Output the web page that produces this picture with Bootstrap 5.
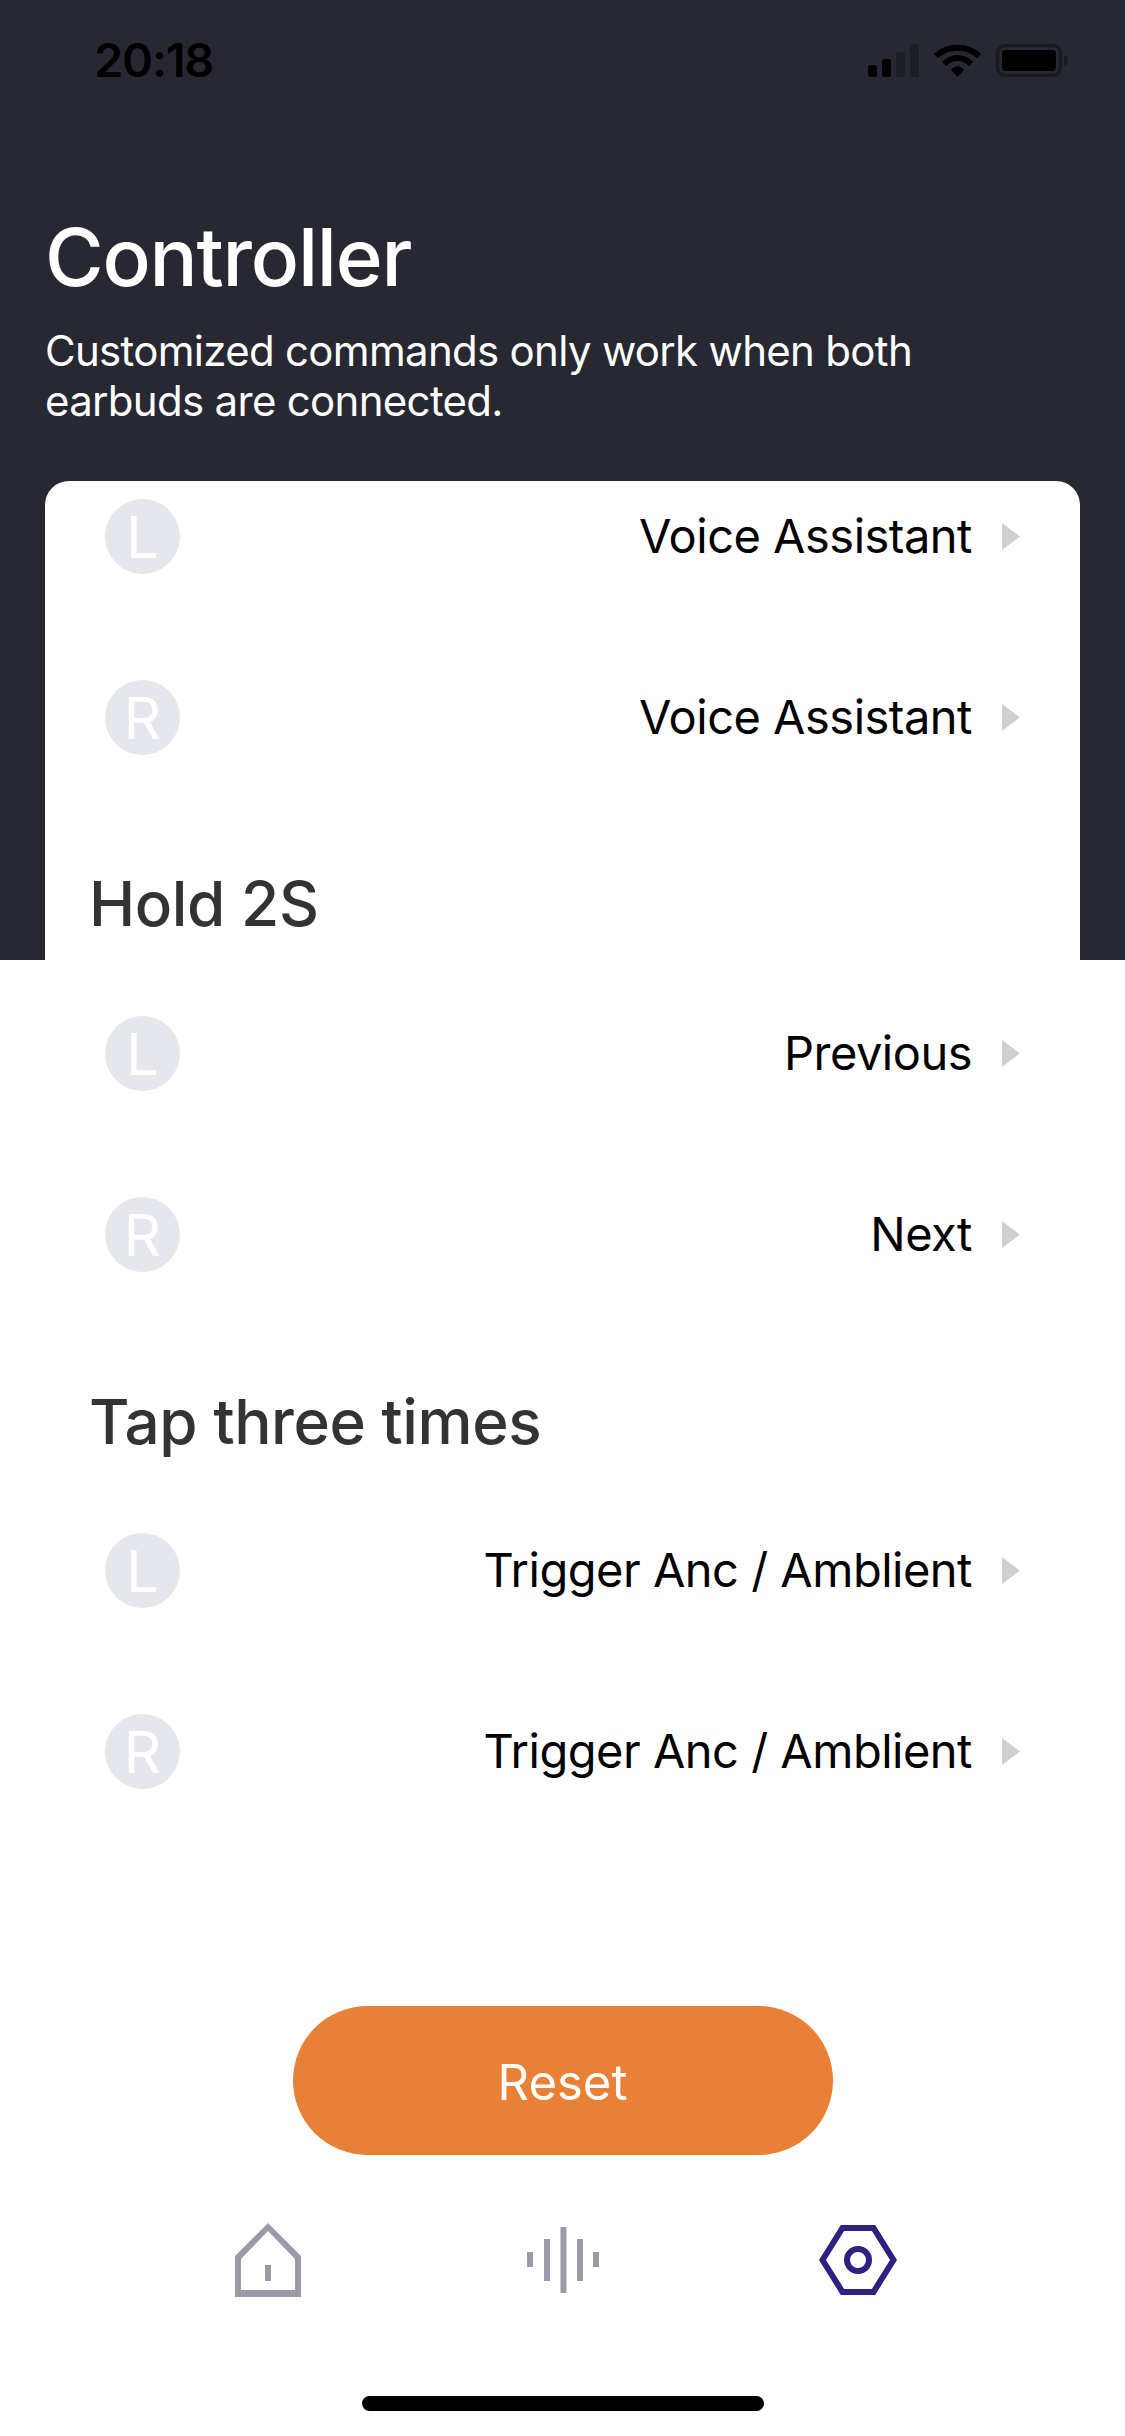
<!DOCTYPE html>
<html lang="en">
<head>
    <meta charset="UTF-8">
    <meta name="viewport" content="width=device-width, initial-scale=1.0">
    <title>Controller</title>
    <link href="https://cdn.jsdelivr.net/npm/bootstrap@5.3.0/dist/css/bootstrap.min.css" rel="stylesheet">
    <style>
        body {
            width: 1125px;
            height: 2436px;
            overflow: hidden;
            background-color: #fff;
            font-family: Inter, "Noto Sans", sans-serif;
        }

        .top-panel {
            height: 960px;
            overflow: hidden;
            background-color: #272832;
            padding: 0 45px;
        }

        .status-bar {
            height: 120px;
            margin: 0 -45px;
            padding: 0 57px 0 94px;
        }

        .status-time {
            font-size: 47px;
            font-weight: 600;
            color: #000;
            letter-spacing: -1.2px;
        }

        .page-title {
            margin: 89px 0 21px 0;
            font-size: 80px;
            line-height: 96px;
            font-weight: 500;
            color: #fff;
            letter-spacing: -1.2px;
        }

        .page-desc {
            margin: 0 0 55px 0;
            font-size: 42px;
            line-height: 50px;
            color: #fff;
            letter-spacing: -0.7px;
        }

        .sheet {
            height: 600px;
            border-radius: 24px 24px 0 0;
            background-color: #fff;
            padding-top: 18px;
        }

        .cmd-row {
            height: 75px;
            padding: 0 60px 0 60px;
        }

        .cmd-row + .cmd-row {
            margin-top: 106px;
        }

        .side-dot {
            width: 75px;
            height: 75px;
            background-color: #e6e7ec;
            color: #fff;
            font-size: 58px;
            line-height: 1;
        }

        .cmd-name {
            font-size: 47px;
            color: #000;
            margin-right: 30px;
            letter-spacing: -0.5px;
        }

        .cmd-arrow {
            width: 18px;
            height: 27px;
            fill: #cfcfcf;
        }

        .group-title {
            margin: 111px 0 0 44px;
            font-size: 62px;
            line-height: 76px;
            font-weight: 500;
            color: #333;
            letter-spacing: -0.4px;
        }

        .lower-list {
            padding: 56px 45px 0 45px;
        }

        .lower-list .group-title {
            margin-top: 112px;
            margin-bottom: 73px;
        }

        .btn-reset {
            display: block;
            width: 540px;
            height: 149px;
            margin: 217px auto 0 auto;
            padding-top: 10px;
            border: none;
            border-radius: 75px;
            background-color: #e88035;
            color: #fff;
            font-size: 49px;
        }

        .tab-strip {
            width: 885px;
            height: 74px;
            margin: 68px auto 0 auto;
        }

        .home-line {
            width: 402px;
            height: 15px;
            margin: 99px auto 0 auto;
            background-color: #000;
        }
    </style>
</head>
<body>
    <div class="top-panel">
        <div class="status-bar d-flex justify-content-between align-items-center">
            <span class="status-time">20:18</span>
            <svg width="200" height="33" viewBox="0 0 200 33">
                <rect x="0" y="21" width="9" height="12" rx="2.5" fill="#000"/>
                <rect x="14" y="15" width="9" height="18" rx="2.5" fill="#000"/>
                <rect x="28" y="8" width="9" height="25" rx="2.5" fill="#1d1d26"/>
                <rect x="42" y="0" width="9" height="33" rx="2.5" fill="#1d1d26"/>
                <path d="M68 12C80 1 99 1 111 12" fill="none" stroke="#000" stroke-width="6"/>
                <path d="M76 20C84 12 95 12 103 20" fill="none" stroke="#000" stroke-width="6"/>
                <path d="M83 26C87 21 92 21 96 26L89.500 33Z" fill="#000"/>
                <rect x="129.500" y="1.500" width="63" height="30" rx="8" fill="none" stroke="#1a1a23" stroke-width="3.500"/>
                <rect x="134" y="6" width="54" height="21" rx="4" fill="#000"/>
                <path d="M196 11C199 12 200 14 200 16.500C200 19 199 21 196 22Z" fill="#1a1a23"/>
            </svg>
        </div>
        <h1 class="page-title">Controller</h1>
        <p class="page-desc">Customized commands only work when both<br>earbuds are connected.</p>
        <div class="sheet">
            <div class="cmd-row d-flex align-items-center">
                <span class="side-dot rounded-circle d-flex justify-content-center align-items-center">L</span>
                <span class="cmd-name ms-auto">Voice Assistant</span>
                <svg class="cmd-arrow" viewBox="0 0 18 27"><path d="M0 0L18 13.500L0 27Z"/></svg>
            </div>
            <div class="cmd-row d-flex align-items-center">
                <span class="side-dot rounded-circle d-flex justify-content-center align-items-center">R</span>
                <span class="cmd-name ms-auto">Voice Assistant</span>
                <svg class="cmd-arrow" viewBox="0 0 18 27"><path d="M0 0L18 13.500L0 27Z"/></svg>
            </div>
            <h2 class="group-title">Hold 2S</h2>
        </div>
    </div>

    <div class="lower-list">
        <div class="cmd-row d-flex align-items-center">
            <span class="side-dot rounded-circle d-flex justify-content-center align-items-center">L</span>
            <span class="cmd-name ms-auto">Previous</span>
            <svg class="cmd-arrow" viewBox="0 0 18 27"><path d="M0 0L18 13.500L0 27Z"/></svg>
        </div>
        <div class="cmd-row d-flex align-items-center">
            <span class="side-dot rounded-circle d-flex justify-content-center align-items-center">R</span>
            <span class="cmd-name ms-auto">Next</span>
            <svg class="cmd-arrow" viewBox="0 0 18 27"><path d="M0 0L18 13.500L0 27Z"/></svg>
        </div>
        <h2 class="group-title">Tap three times</h2>
        <div class="cmd-row d-flex align-items-center">
            <span class="side-dot rounded-circle d-flex justify-content-center align-items-center">L</span>
            <span class="cmd-name ms-auto">Trigger Anc / Amblient</span>
            <svg class="cmd-arrow" viewBox="0 0 18 27"><path d="M0 0L18 13.500L0 27Z"/></svg>
        </div>
        <div class="cmd-row d-flex align-items-center">
            <span class="side-dot rounded-circle d-flex justify-content-center align-items-center">R</span>
            <span class="cmd-name ms-auto">Trigger Anc / Amblient</span>
            <svg class="cmd-arrow" viewBox="0 0 18 27"><path d="M0 0L18 13.500L0 27Z"/></svg>
        </div>
    </div>

    <button type="button" class="btn btn-reset">Reset</button>

    <div class="tab-strip d-flex align-items-center">
        <div class="flex-fill w-100 d-flex justify-content-center">
            <svg width="66" height="74" viewBox="0 0 66 74">
                <path fill="#9c9aa8" fill-rule="evenodd" d="M33 0L66 33V74H0V33Z M33 8L6 36V67H60V36Z"/>
                <rect x="30" y="42" width="6" height="16" fill="#9c9aa8"/>
            </svg>
        </div>
        <div class="flex-fill w-100 d-flex justify-content-center">
            <svg width="72" height="66" viewBox="0 0 72 66" fill="#9c9aa8">
                <rect x="0" y="25" width="6" height="15"/>
                <rect x="17" y="12" width="6" height="42"/>
                <rect x="33.500" y="0" width="6" height="66"/>
                <rect x="50" y="12" width="6" height="42"/>
                <rect x="66" y="25" width="6" height="15"/>
            </svg>
        </div>
        <div class="flex-fill w-100 d-flex justify-content-center">
            <svg width="78" height="70" viewBox="0 0 78 70" fill="none" stroke="#2f2082" stroke-width="6">
                <path d="M23.500 3H54.500L74.500 35L54.500 67H23.500L3.500 35Z"/>
                <circle cx="39" cy="35" r="11"/>
            </svg>
        </div>
    </div>

    <div class="home-line rounded-pill"></div>

    <script src="https://cdn.jsdelivr.net/npm/bootstrap@5.3.0/dist/js/bootstrap.bundle.min.js"></script>
</body>
</html>
